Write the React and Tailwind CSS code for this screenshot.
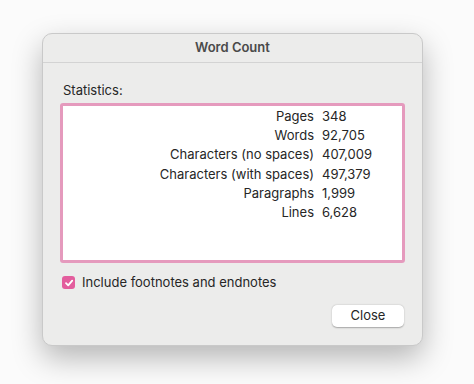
import React, { useState } from 'react';

const stats = [
  ['Pages', '348'],
  ['Words', '92,705'],
  ['Characters (no spaces)', '407,009'],
  ['Characters (with spaces)', '497,379'],
  ['Paragraphs', '1,999'],
  ['Lines', '6,628'],
];

export default function App() {
  const [footnotes, setFootnotes] = useState(true);

  return (
    <div className="w-[474px] h-[384px] bg-[#fbfbfb] pt-[33px] pl-[42px] font-['Inter',sans-serif] text-[13px] text-[#262626]">
      <div className="w-[381px] h-[313px] bg-[#ececeb] rounded-[10px] border border-[#c9c9c9] shadow-[0_12px_30px_rgba(0,0,0,0.28)] flex flex-col overflow-hidden">
        {/* Title bar */}
        <div className="h-[29px] shrink-0 flex items-center justify-center border-b border-[#d3d3d3] font-semibold text-[#4a4a4a]">
          Word Count
        </div>

        <div className="px-[17px] flex flex-col">
          <div className="pl-[3px] mt-[19px] leading-4">Statistics:</div>

          <div className="mt-[5px] h-[160px] bg-white border-[3px] border-[#e59abd] rounded-[3px] pt-[1px]">
            <div className="grid grid-cols-[1fr_auto_80px]">
              {stats.map(([label, value]) => (
                <React.Fragment key={label}>
                  <div className="text-right leading-[19.2px]">{label}</div>
                  <div className="w-[8px]" />
                  <div className="leading-[19.2px]">{value}</div>
                </React.Fragment>
              ))}
            </div>
          </div>

          <label className="mt-[10px] pl-[2px] flex items-center gap-[7px] cursor-pointer">
            <span
              onClick={() => setFootnotes(!footnotes)}
              className="w-[13px] h-[13px] rounded-[3px] bg-[#e35d9d] flex items-center justify-center"
            >
              {footnotes && (
                <svg width="10" height="10" viewBox="0 0 10 10" fill="none">
                  <path d="M2 5.2 L4.2 7.4 L8.2 2.6" stroke="white" strokeWidth="1.8" strokeLinecap="round" strokeLinejoin="round" />
                </svg>
              )}
            </span>
            <span>Include footnotes and endnotes</span>
          </label>

          <div className="mt-[12px] flex justify-end pr-[1px]">
            <button className="w-[72px] h-[22px] bg-white rounded-[5px] shadow-[0_0.5px_1.5px_rgba(0,0,0,0.3)] text-[13px] text-[#262626] leading-none">
              Close
            </button>
          </div>
        </div>
      </div>
    </div>
  );
}
